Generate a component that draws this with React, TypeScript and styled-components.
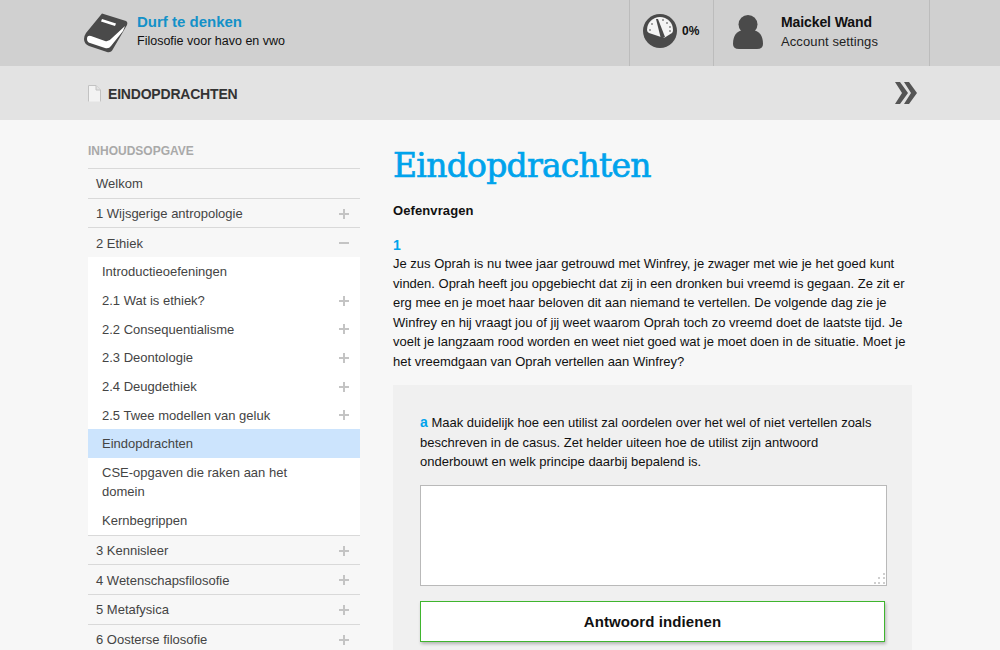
import React from "react";
import styled, { createGlobalStyle } from "styled-components";

const GlobalStyle = createGlobalStyle`
  html, body {
    margin: 0;
    height: 650px;
    overflow: hidden;
    background: #f7f7f7;
    font-family: "Liberation Sans", Arial, sans-serif;
    color: #111;
  }
  * { box-sizing: border-box; }
`;

const Header = styled.header`
  height: 66px;
  background: #d0d0d0;
  display: flex;
  padding-left: 84px;
`;

const Brand = styled.div`
  width: 545px;
  display: flex;
  align-items: center;
  gap: 9px;
`;

const BrandText = styled.div`
  padding-bottom: 2px;
`;

const BrandTitle = styled.div`
  font-size: 15px;
  font-weight: bold;
  line-height: 18px;
  color: #1391c8;
`;

const BrandSub = styled.div`
  font-size: 12.5px;
  line-height: 20px;
  color: #111;
`;

const ProgressCell = styled.div`
  width: 84px;
  border-left: 1px solid #bcbcbc;
  display: flex;
  align-items: center;
  padding: 0 0 4px 13px;
  gap: 5px;
  font-size: 12px;
  font-weight: bold;
  color: #111;
`;

const AccountCell = styled.div`
  width: 217px;
  border-left: 1px solid #bcbcbc;
  border-right: 1px solid #bcbcbc;
  display: flex;
  align-items: center;
  padding: 0 0 3px 19px;
  gap: 18px;
`;

const AccountName = styled.div`
  font-size: 14px;
  font-weight: bold;
  line-height: 19px;
  letter-spacing: -0.1px;
`;

const AccountLink = styled.div`
  font-size: 13px;
  line-height: 19px;
  letter-spacing: 0.1px;
  color: #222;
`;

const SubBar = styled.div`
  height: 54px;
  background: #e3e3e3;
  display: flex;
  align-items: center;
  padding: 0 83px 0 88px;
  gap: 7px;
`;

const SubTitle = styled.div`
  flex: 1;
  padding-top: 2px;
  font-size: 14px;
  font-weight: bold;
  letter-spacing: -0.2px;
  color: #333;
`;

const Body = styled.div`
  display: flex;
  height: 530px;
  overflow: hidden;
  padding-left: 88px;
`;

const Sidebar = styled.nav`
  width: 272px;
  flex: none;
  padding-top: 24px;
`;

const SideHeading = styled.div`
  height: 24px;
  font-size: 12px;
  font-weight: bold;
  line-height: 14px;
  color: #a9a9a9;
`;

const Row = styled.div`
  height: 29.7px;
  border-top: 1px solid #d9d9d9;
  padding: 1px 8px 0;
  display: flex;
  align-items: center;
  justify-content: space-between;
  font-size: 13px;
  color: #444;
`;

const SubList = styled.div`
  background: #fff;
`;

const SubRow = styled.div<{ $active?: boolean }>`
  min-height: 28.7px;
  padding: 5.1px 8px 4.1px 14px;
  display: flex;
  align-items: center;
  justify-content: space-between;
  font-size: 13px;
  line-height: 19.5px;
  color: #444;
  background: ${(p) => (p.$active ? "#cce4fd" : "transparent")};
`;

const Wrapped = styled.span`
  width: 210px;
`;

const Main = styled.main`
  margin-left: 33px;
  width: 519px;
`;

const Title = styled.h1`
  margin: 27px 0 0;
  font-family: "DejaVu Serif", "Liberation Serif", serif;
  font-size: 33px;
  line-height: 38px;
  font-weight: normal;
  letter-spacing: -0.75px;
  -webkit-text-stroke: 0.7px #00a3ec;
  color: #00a3ec;
`;

const Lead = styled.div`
  margin-top: 16px;
  font-size: 13px;
  font-weight: bold;
  line-height: 19px;
  letter-spacing: 0.1px;
  color: #111;
`;

const QuestionNo = styled.div`
  margin-top: 16px;
  font-size: 14px;
  font-weight: bold;
  line-height: 18px;
  color: #00a3ec;
`;

const Para = styled.p`
  margin: 0;
  font-size: 13px;
  line-height: 19.5px;
  color: #111;
`;

const Panel = styled.section`
  margin-top: 14px;
  background: #f0f0f0;
  padding: 28px 25px 0 27px;
  height: 265px;
`;

const Letter = styled.b`
  color: #00a3ec;
  font-size: 14px;
  line-height: 0;
`;

const AnswerWrap = styled.div`
  position: relative;
  margin-top: 13px;
  height: 101px;
`;

const Answer = styled.textarea`
  display: block;
  width: 100%;
  height: 100%;
  background: #fff;
  border: 1px solid #b9b9b9;
  outline: none;
  resize: none;
`;

const Grip = styled.svg`
  position: absolute;
  right: 1px;
  bottom: 1px;
`;

const Submit = styled.button`
  display: block;
  margin-top: 15px;
  width: 465px;
  height: 41px;
  background: #fff;
  border: 1px solid #3fb52e;
  box-shadow: 1px 2px 3px rgba(0, 0, 0, 0.25);
  font-family: inherit;
  font-size: 15px;
  font-weight: bold;
  letter-spacing: 0.1px;
  color: #111;
`;

const Plus = () => (
  <svg width="10" height="10" viewBox="0 0 10 10" style={{ marginRight: 3 }}>
    <path d="M0 4h10v2H0zM4 0h2v10H4z" fill="#c4c4c4" />
  </svg>
);

const Minus = () => (
  <svg width="10" height="10" viewBox="0 0 10 10" style={{ marginRight: 3 }}>
    <path d="M0 4h10v2H0z" fill="#c4c4c4" />
  </svg>
);

const BookIcon = () => (
  <svg width="44" height="40" viewBox="0 0 44 40">
    <path
      d="M18 0.5 L42 8 Q44 9 43 12 L29 36 Q27 40 23 39 L5 33 Q0 31 0 26 Q0 23 2 20 Z"
      fill="#4a4a4a"
    />
    <path
      d="M3 26 Q3 22 7 23 L21 28 Q25 29 28 25 L41 13 L39 18 L27 33 Q25 36 21 35 L6 30 Q3 29 3 26 Z"
      fill="#fff"
    />
    <path d="M18 6 L32 10.5 L31 13 L17 8.5 Z" fill="#fff" />
  </svg>
);

const GaugeIcon = () => (
  <svg width="34" height="34" viewBox="0 0 34 34">
    <circle cx="17" cy="17" r="17" fill="#4a4a4a" />
    <path d="M4 16 A13 13 0 0 1 30 16 Q30 18 29 19 L21 24 L6 19 Q4 18 4 16 Z" fill="#f4f4f4" />
    <path d="M13 5 L15 5 L22 23 L18 25 Z" fill="#4a4a4a" />
    <g fill="#888">
      <circle cx="7" cy="16" r="1" />
      <circle cx="9" cy="10" r="1" />
      <circle cx="20" cy="6" r="1" />
      <circle cx="24" cy="9" r="1" />
      <circle cx="27" cy="13" r="1" />
      <circle cx="27" cy="17" r="1" />
    </g>
  </svg>
);

const UserIcon = () => (
  <svg width="30" height="34" viewBox="0 0 30 34">
    <circle cx="15" cy="9.5" r="9.5" fill="#4a4a4a" />
    <path d="M0 29 Q0 16 11 15 H19 Q30 16 30 29 Q30 34 24 34 H6 Q0 34 0 29 Z" fill="#4a4a4a" />
  </svg>
);

const FileIcon = () => (
  <svg width="13" height="17" viewBox="0 0 13 17">
    <path d="M0.5 16.5 V0.5 H8 L12.5 5 V16.5" fill="#f3f3f3" stroke="#c2c2c2" />
    <path d="M8 0.5 V5 H12.5" fill="#e3e3e3" stroke="#c2c2c2" />
  </svg>
);

const ChevronsIcon = () => (
  <svg width="22" height="22" viewBox="0 0 22 22">
    <path d="M0 0 H5 L13 11 L5 22 H0 L7 11 Z" fill="#555" />
    <path d="M9 0 H14 L22 11 L14 22 H9 L16 11 Z" fill="#555" />
  </svg>
);

const GripIcon = () => (
  <Grip width="13" height="13" viewBox="0 0 13 13">
    <g fill="#cfcfcf">
      <rect x="10" y="1" width="2" height="2" />
      <rect x="5" y="5" width="2" height="2" />
      <rect x="10" y="5" width="2" height="2" />
      <rect x="1" y="10" width="2" height="2" />
      <rect x="5" y="10" width="2" height="2" />
      <rect x="10" y="10" width="2" height="2" />
    </g>
  </Grip>
);

const subItems = ["2.1 Wat is ethiek?", "2.2 Consequentialisme", "2.3 Deontologie", "2.4 Deugdethiek", "2.5 Twee modellen van geluk"];
const lowerItems = ["3 Kennisleer", "4 Wetenschapsfilosofie", "5 Metafysica", "6 Oosterse filosofie"];

export default function App() {
  return (
    <>
      <GlobalStyle />
      <Header>
        <Brand>
          <BookIcon />
          <BrandText>
            <BrandTitle>Durf te denken</BrandTitle>
            <BrandSub>Filosofie voor havo en vwo</BrandSub>
          </BrandText>
        </Brand>
        <ProgressCell>
          <GaugeIcon />
          0%
        </ProgressCell>
        <AccountCell>
          <UserIcon />
          <div>
            <AccountName>Maickel Wand</AccountName>
            <AccountLink>Account settings</AccountLink>
          </div>
        </AccountCell>
      </Header>
      <SubBar>
        <FileIcon />
        <SubTitle>EINDOPDRACHTEN</SubTitle>
        <ChevronsIcon />
      </SubBar>
      <Body>
        <Sidebar>
          <SideHeading>INHOUDSOPGAVE</SideHeading>
          <Row>Welkom</Row>
          <Row>
            1 Wijsgerige antropologie
            <Plus />
          </Row>
          <Row>
            2 Ethiek
            <Minus />
          </Row>
          <SubList>
            <SubRow>Introductieoefeningen</SubRow>
            {subItems.map((item) => (
              <SubRow key={item}>
                {item}
                <Plus />
              </SubRow>
            ))}
            <SubRow $active>Eindopdrachten</SubRow>
            <SubRow>
              <Wrapped>CSE-opgaven die raken aan het domein</Wrapped>
            </SubRow>
            <SubRow>Kernbegrippen</SubRow>
          </SubList>
          {lowerItems.map((item) => (
            <Row key={item}>
              {item}
              <Plus />
            </Row>
          ))}
        </Sidebar>
        <Main>
          <Title>Eindopdrachten</Title>
          <Lead>Oefenvragen</Lead>
          <QuestionNo>1</QuestionNo>
          <Para>
            Je zus Oprah is nu twee jaar getrouwd met Winfrey, je zwager met wie je het goed kunt vinden. Oprah heeft
            jou opgebiecht dat zij in een dronken bui vreemd is gegaan. Ze zit er erg mee en je moet haar beloven dit
            aan niemand te vertellen. De volgende dag zie je Winfrey en hij vraagt jou of jij weet waarom Oprah toch zo
            vreemd doet de laatste tijd. Je voelt je langzaam rood worden en weet niet goed wat je moet doen in de
            situatie. Moet je het vreemdgaan van Oprah vertellen aan Winfrey?
          </Para>
          <Panel>
            <Para>
              <Letter>a</Letter> Maak duidelijk hoe een utilist zal oordelen over het wel of niet vertellen zoals
              beschreven in de casus. Zet helder uiteen hoe de utilist zijn antwoord onderbouwt en welk principe
              daarbij bepalend is.
            </Para>
            <AnswerWrap>
              <Answer />
              <GripIcon />
            </AnswerWrap>
            <Submit>Antwoord indienen</Submit>
          </Panel>
        </Main>
      </Body>
    </>
  );
}
